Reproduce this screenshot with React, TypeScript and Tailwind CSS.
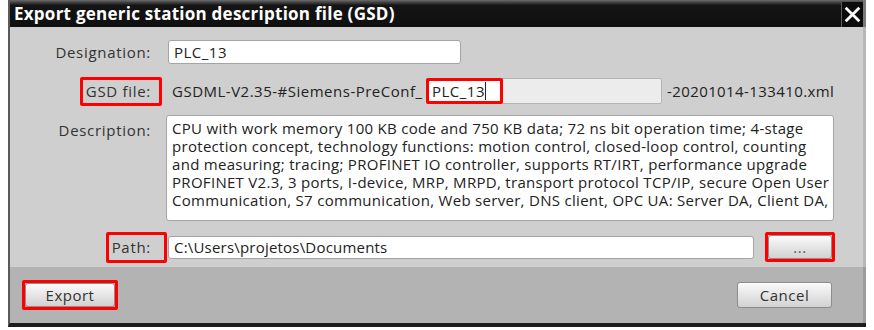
import React from 'react';

const font = { fontFamily: '"Open Sans", "DejaVu Sans", sans-serif' };

const RedBox: React.FC<{ className: string }> = ({ className }) => (
  <span className={`absolute border-[3px] border-[#ff0000] rounded-[2px] pointer-events-none ${className}`} />
);

const Label: React.FC<{ children: React.ReactNode; box?: string }> = ({ children, box }) => (
  <div className="w-[141px] shrink-0 text-right text-[15px] tracking-[0.7px] text-[#333333]">
    <span className="relative">
      {children}
      {box && <RedBox className={box} />}
    </span>
  </div>
);

const Btn: React.FC<{ children: React.ReactNode; className?: string }> = ({ children, className }) => (
  <button
    className={`h-[24px] rounded-[3px] border border-[#8c8c8c] bg-gradient-to-b from-[#fafafa] via-[#e6e6e6] to-[#d2d2d2] text-[15px] tracking-[0.5px] text-[#333333] shadow-[inset_0_1px_0_#ffffff] ${className ?? ''}`}
  >
    {children}
  </button>
);

const descLines = [
  'CPU with work memory 100 KB code and 750 KB data; 72 ns bit operation time; 4-stage',
  'protection concept, technology functions: motion control, closed-loop control, counting',
  'and measuring; tracing; PROFINET IO controller, supports RT/IRT, performance upgrade',
  'PROFINET V2.3, 3 ports, I-device, MRP, MRPD, transport protocol TCP/IP, secure Open User',
  'Communication, S7 communication, Web server, DNS client, OPC UA: Server DA, Client DA,',
];

const App: React.FC = () => {
  return (
    <div className="w-[874px] h-[330px] bg-white overflow-hidden" style={font}>
      <div className="ml-[8px] w-[858px] border-l-2 border-[#5a5a5a] border-b-[4px] border-b-[#1c1c1c] flex flex-col">
        {/* title bar */}
        <div className="h-[27px] flex items-stretch bg-gradient-to-b from-[#6c6c6c] via-[#141414] via-[20%] to-[#101010]">
          <div className="flex-1 flex items-center pl-[4px] text-white font-bold text-[17px] tracking-[0.25px]">
            Export generic station description file (GSD)
          </div>
          <div className="w-[22px] mt-[2px] border-l border-[#5e5e5e] flex items-center justify-center bg-[#0c0c0c]">
            <svg width="17" height="17" viewBox="0 0 16 16">
              <path d="M2.5 2.5 L13.5 13.5 M13.5 2.5 L2.5 13.5" stroke="#ffffff" strokeWidth="2.6" strokeLinecap="square" />
            </svg>
          </div>
          <div className="w-[3px] bg-[#7a7a7a]" />
        </div>

        {/* body */}
        <div className="bg-[#cfcfcf] pt-[13px] pb-[6px] border-r-[3px] border-[#b8b8b8]">
          <div className="flex items-center h-[24px]">
            <Label>Designation:</Label>
            <div className="ml-[17px] w-[293px] h-[24px] bg-white border border-[#a4a4a4] rounded-[3px] flex items-center pl-[5px] text-[15px] tracking-[0.5px] text-[#222222]">
              PLC_13
            </div>
          </div>

          <div className="flex items-center h-[26px] mt-[14px]">
            <Label box="-left-[6px] -right-[11px] -top-[4px] -bottom-[5px]">GSD file:</Label>
            <div className="ml-[21px] w-[254px] text-[15px] tracking-[0.5px] text-[#222222] whitespace-nowrap">GSDML-V2.35-#Siemens-PreConf_</div>
            <div className="w-[236px] h-[26px] bg-[#ececec] border border-[#b4b4b4] rounded-[2px] flex">
              <span className="w-[77px] -ml-px -my-px bg-white border-[3px] border-[#ff0000] rounded-[2px] flex items-center pl-[3px] text-[15px] tracking-[0.5px] text-[#222222]">
                PLC_13<span className="inline-block w-px h-[18px] bg-[#222222]" />
              </span>
            </div>
            <div className="ml-[5px] text-[15px] tracking-[0.4px] text-[#222222] whitespace-nowrap">-20201014-133410.xml</div>
          </div>

          <div className="flex items-start mt-[11px]">
            <div className="pt-[4px]">
              <Label>Description:</Label>
            </div>
            <div className="ml-[15px] w-[668px] h-[106px] bg-white border border-[#a4a4a4] rounded-[3px] pl-[5px] pt-[3px] text-[15px] tracking-[0.3px] leading-[18px] text-[#222222] overflow-hidden">
              {descLines.map((l) => (
                <div key={l} className="whitespace-nowrap">{l}</div>
              ))}
            </div>
          </div>

          <div className="flex items-center h-[28px] mt-[12px]">
            <Label box="-left-[6px] -right-[16px] -top-[5px] -bottom-[6px]">Path:</Label>
            <div className="ml-[17px] w-[586px] h-[23px] bg-white border border-[#a4a4a4] rounded-[3px] flex items-center pl-[5px] text-[15px] tracking-[0.2px] text-[#222222]">
              C:\Users\projetos\Documents
            </div>
            <div className="ml-[11px] border-[3px] border-[#ff0000] rounded-[2px] p-0">
              <Btn className="w-[64px] h-[24px] text-[#555555] leading-none">...</Btn>
            </div>
          </div>
        </div>

        {/* footer */}
        <div className="h-[56px] bg-[#b3b3b3] border-r-[3px] border-[#9c9c9c] flex items-center justify-between pl-[12px] pr-[31px]">
          <div className="border-[3px] border-[#ff0000] rounded-[2px]">
            <Btn className="w-[90px] h-[22px]">Export</Btn>
          </div>
          <Btn className="w-[95px] h-[26px]">Cancel</Btn>
        </div>
      </div>
    </div>
  );
};

export default App;
